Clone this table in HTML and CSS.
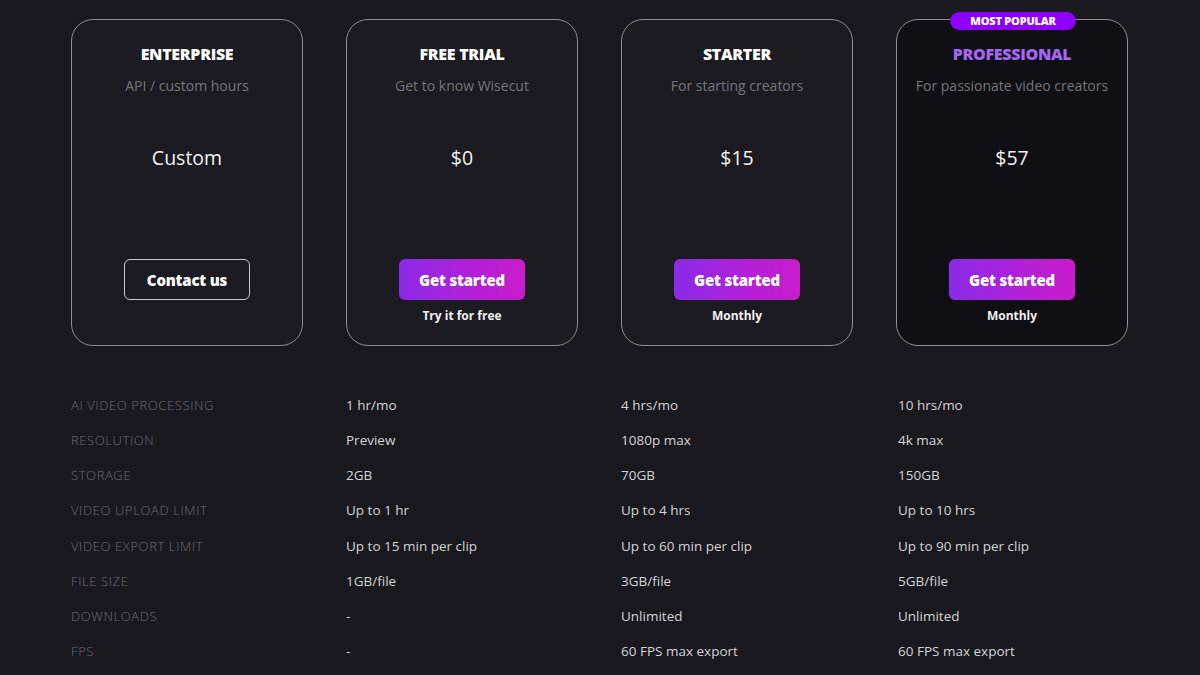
FILE: index.html
```html
<!DOCTYPE html>
<html>
<head>
<meta charset="utf-8">
<link rel="stylesheet" href="styles.css">
</head>
<body>
<div class="page">
  <div class="plans">
    <div class="card">
      <div class="title">ENTERPRISE</div>
      <div class="sub">API / custom hours</div>
      <div class="price">Custom</div>
      <div class="btn btn-outline">Contact us</div>
    </div>
    <div class="card">
      <div class="title">FREE TRIAL</div>
      <div class="sub">Get to know Wisecut</div>
      <div class="price">$0</div>
      <div class="btn btn-grad">Get started</div>
      <div class="note">Try it for free</div>
    </div>
    <div class="card">
      <div class="title">STARTER</div>
      <div class="sub">For starting creators</div>
      <div class="price">$15</div>
      <div class="btn btn-grad">Get started</div>
      <div class="note">Monthly</div>
    </div>
    <div class="card card-pro">
      <div class="badge">MOST POPULAR</div>
      <div class="title title-pro">PROFESSIONAL</div>
      <div class="sub">For passionate video creators</div>
      <div class="price">$57</div>
      <div class="btn btn-grad">Get started</div>
      <div class="note">Monthly</div>
    </div>
  </div>

  <div class="table">
    <div class="row"><div class="label">AI VIDEO PROCESSING</div><div class="val">1 hr/mo</div><div class="val">4 hrs/mo</div><div class="val">10 hrs/mo</div></div>
    <div class="row"><div class="label">RESOLUTION</div><div class="val">Preview</div><div class="val">1080p max</div><div class="val">4k max</div></div>
    <div class="row"><div class="label">STORAGE</div><div class="val">2GB</div><div class="val">70GB</div><div class="val">150GB</div></div>
    <div class="row"><div class="label">VIDEO UPLOAD LIMIT</div><div class="val">Up to 1 hr</div><div class="val">Up to 4 hrs</div><div class="val">Up to 10 hrs</div></div>
    <div class="row"><div class="label">VIDEO EXPORT LIMIT</div><div class="val">Up to 15 min per clip</div><div class="val">Up to 60 min per clip</div><div class="val">Up to 90 min per clip</div></div>
    <div class="row"><div class="label">FILE SIZE</div><div class="val">1GB/file</div><div class="val">3GB/file</div><div class="val">5GB/file</div></div>
    <div class="row"><div class="label">DOWNLOADS</div><div class="val">-</div><div class="val">Unlimited</div><div class="val">Unlimited</div></div>
    <div class="row"><div class="label">FPS</div><div class="val">-</div><div class="val">60 FPS max export</div><div class="val">60 FPS max export</div></div>
  </div>
</div>
</body>
</html>
```

FILE: styles.css
```css
html, body {
  margin: 0;
  padding: 0;
  background: #1a191f;
  height: 100%;
  overflow: hidden;
}
body {
  font-family: "Open Sans", "Liberation Sans", sans-serif;
  color: #ffffff;
}
.page {
  padding: 19px 0 0 71px;
}
.plans {
  display: grid;
  grid-template-columns: repeat(4, 232px);
  column-gap: 43px;
}
.card {
  position: relative;
  box-sizing: border-box;
  height: 327px;
  border: 1px solid #8f8e93;
  border-radius: 22px;
  background: #1c1b21;
  display: flex;
  flex-direction: column;
  align-items: center;
  padding-top: 24px;
}
.card-pro {
  background: #0f0f14;
}
.badge {
  position: absolute;
  top: -8px;
  left: 53px;
  width: 126px;
  height: 18px;
  border-radius: 9px;
  background: #8c00ff;
  color: #fff;
  font-size: 11px;
  font-weight: 800;
  letter-spacing: -0.2px;
  line-height: 18px;
  text-align: center;
}
.title {
  font-size: 16px;
  font-weight: 800;
  line-height: 20px;
  letter-spacing: -0.3px;
}
.title-pro {
  color: #a366f0;
}
.sub {
  margin-top: 12px;
  font-size: 14px;
  line-height: 20px;
  color: #76757c;
}
.price {
  margin-top: 50px;
  font-size: 19.5px;
  line-height: 24px;
  color: #f2f2f4;
}
.btn {
  box-sizing: border-box;
  margin-top: 89px;
  height: 41px;
  width: 126px;
  border-radius: 6px;
  display: flex;
  align-items: center;
  justify-content: center;
  font-size: 15px;
  font-weight: 800;
  letter-spacing: -0.2px;
}
.btn-grad {
  background: linear-gradient(90deg, #8a2be8 0%, #b51fd8 60%, #c81cca 100%);
}
.btn-outline {
  border: 1px solid #c9c9cc;
  background: transparent;
}
.note {
  margin-top: 8px;
  font-size: 12px;
  line-height: 16px;
  font-weight: 700;
  color: #f0f0f2;
}
.table {
  margin-top: 41px;
}
.row {
  display: grid;
  grid-template-columns: 275px 275px 277px 232px;
  height: 35.25px;
  align-items: center;
}
.label {
  font-size: 13px;
  font-weight: 300;
  letter-spacing: 0.6px;
  color: #6f6e75;
}
.val {
  font-size: 13.5px;
  color: #d4d4d8;
}
```
